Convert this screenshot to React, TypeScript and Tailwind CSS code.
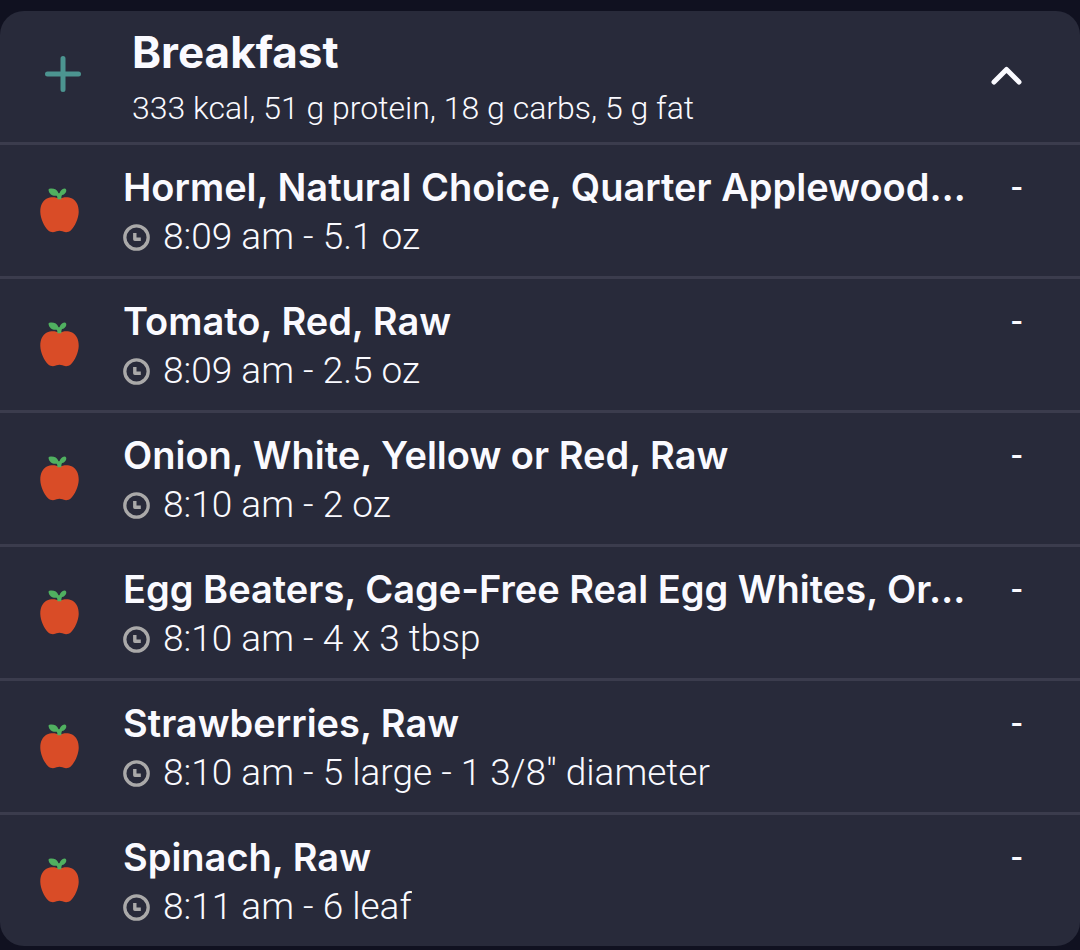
import React, { useState } from "react";

type Food = {
  name: string;
  time: string;
  amount: string;
};

const FOODS: Food[] = [
  { name: "Hormel, Natural Choice, Quarter Applewood…", time: "8:09 am", amount: "5.1 oz" },
  { name: "Tomato, Red, Raw", time: "8:09 am", amount: "2.5 oz" },
  { name: "Onion, White, Yellow or Red, Raw", time: "8:10 am", amount: "2 oz" },
  { name: "Egg Beaters, Cage-Free Real Egg Whites, Or…", time: "8:10 am", amount: "4 x 3 tbsp" },
  { name: "Strawberries, Raw", time: "8:10 am", amount: '5 large - 1 3/8" diameter' },
  { name: "Spinach, Raw", time: "8:11 am", amount: "6 leaf" },
];

function PlusIcon() {
  return (
    <svg width="38" height="38" viewBox="0 0 38 38" fill="none" stroke="#4c9490" strokeWidth="5" strokeLinecap="round" aria-hidden="true">
      <path d="M19 3.5v31M3.5 19h31" />
    </svg>
  );
}

function ChevronIcon({ open }: { open: boolean }) {
  return (
    <svg
      width="32"
      height="20"
      viewBox="0 0 32 20"
      fill="none"
      stroke="currentColor"
      strokeWidth="5"
      strokeLinecap="round"
      strokeLinejoin="round"
      className={open ? "" : "rotate-180"}
      aria-hidden="true"
    >
      <path d="M4 16 16.5 3.5 29 16" />
    </svg>
  );
}

function AppleIcon() {
  return (
    <svg width="39" height="45" viewBox="0 0 40 46" className="mt-6 shrink-0" aria-hidden="true">
      <path
        fill="#d94c27"
        d="M20 11C16 9 11 8.800 7 10.800C2.500 13.500 .2 18 .3 24.500C.5 31 4 39 8.500 43.500C11 46 15.500 45.300 17 44.400C19 43.500 21 43.500 23 44.400C24.500 45.300 29 46 31.500 43.500C36 39 39.500 31 39.700 24.500C39.800 18 37.500 13.500 33 10.800C29 8.800 24 9 20 11Z"
      />
      <path
        fill="#50b060"
        d="M17.800 11.500C18 9.500 17.700 8.600 17 7.800C13.500 8.600 9.500 6.500 8.800 2.200C8.700 1 9 .7 10 .6C14 0 17.800 1.500 18.700 4.900C19.200 5.600 19.700 5.600 20.200 4.900C21 2.500 22.500 .9 25 .5C26.800 .6 27.400 2 26.700 3.900C25.800 5.500 24.500 6.500 22.700 7.200C21.900 8.300 21.900 9.500 21.900 11.500Z"
      />
    </svg>
  );
}

function ClockIcon() {
  return (
    <svg width="27" height="27" viewBox="0 0 27 27" fill="none" stroke="#aaa9a9" className="shrink-0" aria-hidden="true">
      <circle cx="13.500" cy="13.500" r="11.700" strokeWidth="3.300" />
      <path d="M11.800 9v6.200h6" strokeWidth="3.400" strokeLinejoin="round" />
    </svg>
  );
}

function FoodRow({ food }: { food: Food }) {
  return (
    <li className="flex items-start gap-11 border-t-3 border-[#3b3c4d] pt-[19px] pr-[58px] pb-3 pl-10">
      <AppleIcon />
      <div className="min-w-0 flex-1">
        <div className="flex items-center justify-between gap-4">
          <h3 className="truncate font-[Inter,sans-serif] text-[38px] leading-[46px] font-semibold">{food.name}</h3>
          <span className="text-[38px] leading-[46px]">-</span>
        </div>
        <div className="flex items-center gap-[13px]">
          <ClockIcon />
          <p className="truncate text-[37px] leading-[54px] font-light">
            {food.time} - {food.amount}
          </p>
        </div>
      </div>
    </li>
  );
}

export default function App() {
  const [open, setOpen] = useState(true);

  return (
    <main className="min-h-screen bg-[#101120] pt-[11px] pb-1 font-[Roboto,sans-serif] text-[#fafaff]">
      <section className="overflow-hidden rounded-3xl bg-[#282a3a]">
        <header className="flex items-start justify-between pt-[15px] pr-[58px] pb-1 pl-11">
          <div className="flex items-start gap-[50px]">
            <button type="button" aria-label="Add food" className="mt-[29px]">
              <PlusIcon />
            </button>
            <div>
              <h2 className="font-[Inter,sans-serif] text-[44px] leading-[52px] font-bold">Breakfast</h2>
              <p className="text-[32px] leading-[60px] font-light">333 kcal, 51 g protein, 18 g carbs, 5 g fat</p>
            </div>
          </div>
          <button
            type="button"
            aria-label="Toggle breakfast"
            aria-expanded={open}
            onClick={() => setOpen((v) => !v)}
            className="mt-10"
          >
            <ChevronIcon open={open} />
          </button>
        </header>
        {open && (
          <ul>
            {FOODS.map((food) => (
              <FoodRow key={food.name} food={food} />
            ))}
          </ul>
        )}
      </section>
    </main>
  );
}
